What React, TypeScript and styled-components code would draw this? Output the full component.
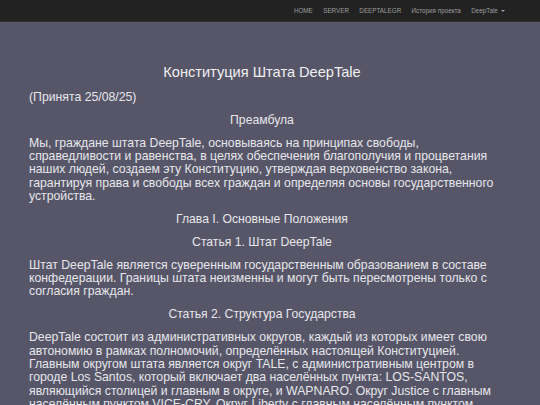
import styled, {createGlobalStyle} from "styled-components";

const GlobalStyle = createGlobalStyle`
	html, body {
		margin: 0;
		padding: 0;
		background: #575668;
	}
	body {
		font-family: "Liberation Sans", Arial, sans-serif;
		color: #e6e6ea;
	}
`;

const StyledNavbar = styled.nav`
	height: 21px;
	background: #222222;
	border-bottom: 1px solid #303030;
	display: flex;
	justify-content: flex-end;
	align-items: center;
	padding-right: 30px;
`;

const StyledNavItem = styled.a`
	font-size: 6.3px;
	color: #9d9d9d;
	padding: 0 5.2px;
	text-decoration: none;
	display: flex;
	align-items: center;
	gap: 3px;
`;

const StyledCaret = styled.span`
	width: 0;
	height: 0;
	border-left: 2px solid transparent;
	border-right: 2px solid transparent;
	border-top: 2px solid #9d9d9d;
`;

const StyledContainer = styled.main`
	width: 466px;
	padding: 42px 0 0 29px;
	display: flex;
	flex-direction: column;
	gap: 9.7px;
`;

const StyledTitle = styled.h1`
	margin: 0;
	font-size: 14.6px;
	font-weight: normal;
	line-height: 17px;
	text-align: center;
	color: #f0f0f2;
`;

const StyledHeading = styled.h3`
	margin: 0;
	font-size: 12.2px;
	font-weight: normal;
	line-height: 13.3px;
	text-align: center;
`;

const StyledText = styled.p`
	margin: 0;
	font-size: 12.25px;
	line-height: 13.3px;
`;

const navItems = ["HOME", "SERVER", "DEEPTALEGR", "История проекта"];

export default function App() {
	return (
		<>
			<GlobalStyle />
			<StyledNavbar>
				{navItems.map(item => (
					<StyledNavItem key={item}>{item}</StyledNavItem>
				))}
				<StyledNavItem>DeepTale <StyledCaret /></StyledNavItem>
			</StyledNavbar>
			<StyledContainer>
				<StyledTitle>Конституция Штата DeepTale</StyledTitle>
				<StyledText>(Принята 25/08/25)</StyledText>
				<StyledHeading>Преамбула</StyledHeading>
				<StyledText>
					Мы, граждане штата DeepTale, основываясь на принципах свободы, справедливости и равенства, в целях обеспечения благополучия и процветания наших людей, создаем эту Конституцию, утверждая верховенство закона, гарантируя права и свободы всех граждан и определяя основы государственного устройства.
				</StyledText>
				<StyledHeading>Глава I. Основные Положения</StyledHeading>
				<StyledHeading>Статья 1. Штат DeepTale</StyledHeading>
				<StyledText>
					Штат DeepTale является суверенным государственным образованием в составе конфедерации. Границы штата неизменны и могут быть пересмотрены только с согласия граждан.
				</StyledText>
				<StyledHeading>Статья 2. Структура Государства</StyledHeading>
				<StyledText>
					DeepTale состоит из административных округов, каждый из которых имеет свою автономию в рамках полномочий, определённых настоящей Конституцией. Главным округом штата является округ TALE, с административным центром в городе Los Santos, который включает два населённых пункта: LOS-SANTOS, являющийся столицей и главным в округе, и WAPNARO. Округ Justice с главным населённым пунктом VICE-CRY. Округ Liberty с главным населённым пунктом
				</StyledText>
			</StyledContainer>
		</>
	);
}
